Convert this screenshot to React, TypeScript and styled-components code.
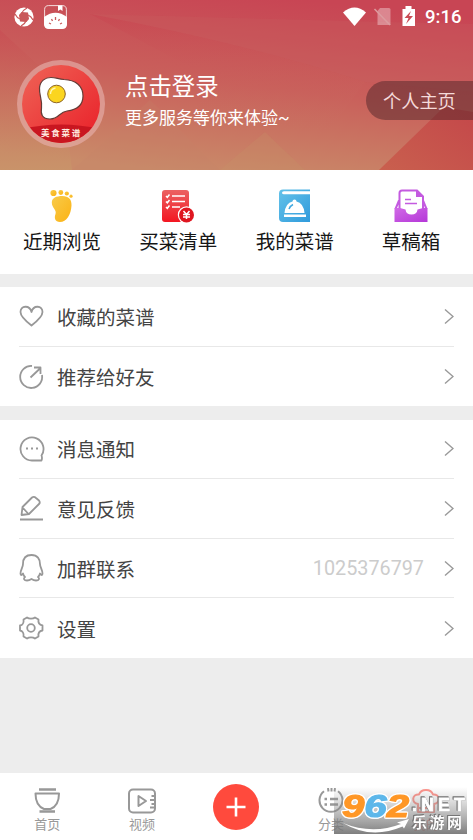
import React from "react";
import styled, { createGlobalStyle } from "styled-components";

const Colors = {
  text: "#161616",
  rowText: "#444",
  icon: "#989898",
  line: "#e8e8e8",
  gap: "#ededed",
  accent: "#ff4a3d",
};

const App = () => {
  return (
    <Screen>
      <GlobalStyle />
      <Header>
        <HeaderBackdrop />
        <StatusBar>
          <StatusGroup>
            <SwirlIcon />
            <NotebookIcon />
          </StatusGroup>
          <StatusIcons />
          <Clock>9:16</Clock>
        </StatusBar>
        <Profile>
          <Avatar>
            <EggLogo />
          </Avatar>
          <ProfileText>
            <LoginTitle>点击登录</LoginTitle>
            <LoginHint>更多服务等你来体验~</LoginHint>
          </ProfileText>
          <HomePill>个人主页</HomePill>
        </Profile>
      </Header>
      <QuickBar>
        {quickItems.map((item) => (
          <QuickItem key={item.label}>
            {item.icon}
            <span>{item.label}</span>
          </QuickItem>
        ))}
      </QuickBar>
      {groups.map((rows, idx) => (
        <Group key={idx}>
          {rows.map((row) => (
            <Row key={row.label}>
              <RowIcon viewBox="0 0 26 28">{row.icon}</RowIcon>
              <RowLabel>{row.label}</RowLabel>
              {row.value && <RowValue>{row.value}</RowValue>}
              <Chevron viewBox="0 0 10 17">
                <path d="M1 1.500 9 8.500 1 15.500" />
              </Chevron>
            </Row>
          ))}
        </Group>
      ))}
      <TabBar>
        <Tab>
          <TabIcon viewBox="0 0 30 26">
            <path d="M7 1.500h17M7.500 23.500h15.500" strokeWidth="2.600" />
            <path d="M3.500 5.500h23.500c0 8-3.500 13.500-8.500 15.500h-6.500C7 19 3.500 13.500 3.500 5.500z" />
          </TabIcon>
          首页
        </Tab>
        <Tab>
          <TabIcon viewBox="0 0 30 26">
            <rect x="2" y="1.500" width="26" height="23" rx="4" />
            <path d="M11.500 8v10l7.500-5zM24.500 8H28M23 12h5M24.500 16H28M23 19.500h5" />
          </TabIcon>
          视频
        </Tab>
        <Tab>
          <AddButton>
            <svg width="20" height="20" viewBox="0 0 20 20">
              <path d="M10 .5v19M.5 10h19" stroke="#fff" strokeWidth="2.600" />
            </svg>
          </AddButton>
        </Tab>
        <Tab>
          <TabIcon viewBox="0 0 30 26">
            <path d="M8 3.200a11.500 11.500 0 1 0 14 0M12 0l.5 3.500M15.500 0v3.500M19 0l-.5 3.500" />
            <path d="M8.500 11h2.500M14 11h8M8.500 16.500h2.500M14 16.500h8" strokeWidth="2.400" />
          </TabIcon>
          分类
        </Tab>
        <Tab $active>
          <TabIcon viewBox="0 0 30 26">
            <path d="M7 16c-7-1-6-10 1-9.500C10 .5 20 .5 22 6.500c7-.5 8 8.500 1 9.500v8H7zM7 20h16" />
          </TabIcon>
          我的
        </Tab>
      </TabBar>
      <SiteMark viewBox="0 0 134 48">
        <defs>
          <linearGradient id="markShade" x1="0" y1="0" x2="0" y2="1">
            <stop offset="0" stopColor="#999" stopOpacity="0" />
            <stop offset=".45" stopColor="#8a8a8a" stopOpacity=".45" />
            <stop offset="1" stopColor="#737373" stopOpacity=".92" />
          </linearGradient>
        </defs>
        <rect width="133" height="47" fill="url(#markShade)" />
        <path d="M9 36Q38 48 67 37l-4-1.500 12-3.500-5 9.500-1.500-2Q37 53 9 36z" fill="#fff" />
        <MarkDigits x="8" y="30" textLength="67" lengthAdjust="spacingAndGlyphs">
          <Digit $color="#ff9726">9</Digit>
          <Digit $color="#5db7ea">6</Digit>
          <Digit $color="#ff9726">2</Digit>
        </MarkDigits>
        <MarkDomain x="78" y="23.500" textLength="53" lengthAdjust="spacing">.NET</MarkDomain>
        <MarkName x="78" y="40.500" textLength="50">乐游网</MarkName>
      </SiteMark>
    </Screen>
  );
};

const HeaderBackdrop = () => (
  <Backdrop viewBox="0 0 473 170" preserveAspectRatio="none">
    <defs>
      <linearGradient id="base" x1=".65" y1="0" x2=".35" y2="1">
        <stop offset="0" stopColor="#c84554" />
        <stop offset=".5" stopColor="#c9605b" />
        <stop offset="1" stopColor="#c98b69" />
      </linearGradient>
      <linearGradient id="rightFold" x1="0" y1="1" x2="1" y2="0">
        <stop offset="0" stopColor="#c9604e" />
        <stop offset="1" stopColor="#c4474a" />
      </linearGradient>
      <linearGradient id="midFold" x1="0" y1="0" x2="0" y2="1">
        <stop offset="0" stopColor="#c94450" stopOpacity=".7" />
        <stop offset=".75" stopColor="#c97866" stopOpacity="0" />
      </linearGradient>
      <linearGradient id="leftFold" x1="0" y1="0" x2="0" y2="1">
        <stop offset="0" stopColor="#c84c53" />
        <stop offset="1" stopColor="#c9986a" />
      </linearGradient>
    </defs>
    <rect width="473" height="170" fill="url(#base)" />
    <path d="M0 30 62 87 72 170H0z" fill="url(#leftFold)" opacity=".6" />
    <path d="M90 14Q240 42 365 82L473 92V24Q300 20 90 14z" fill="#c96462" opacity=".2" />
    <path d="M90 14Q240 42 365 82L300 170H150L215 80z" fill="url(#midFold)" opacity=".7" />
    <path d="M72 170 150 100 220 170z" fill="#c98468" opacity=".2" />
    <path d="M220 170 265 132 305 170z" fill="#c99569" opacity=".25" />
    <path d="M379 170 444 107 473 112V170z" fill="url(#rightFold)" />
  </Backdrop>
);

const SwirlIcon = () => (
  <svg width="20" height="20" viewBox="0 0 20 20">
    <circle cx="10" cy="10" r="9.600" fill="#fff" />
    <path d="M7.500 5 14 5.500 15 12 12.500 15 6 14.500 5 8z" fill="#c95859" />
    <g fill="none" stroke="#c95859" strokeWidth="1.200">
      <path d="M8 6Q9 3 13 1M14 8Q17 9 19 13M12 14Q11 17 7 19M6 12Q3 11 1 7" />
    </g>
  </svg>
);

const NotebookIcon = () => (
  <svg width="23" height="24" viewBox="0 0 23 24">
    <rect x=".6" y=".6" width="21.800" height="22.500" rx="4" fill="none" stroke="#fff" strokeWidth=".8" />
    <path d="M0 12Q11.500 3.500 23 12v7q0 5-5 5H5q-5 0-5-5z" fill="#fff" />
    <path d="M14 .5h4.500V6l-2.200-1.500L14 6z" fill="#fff" />
    <path d="M11.500 12v3M7.500 14l1 2M15.500 14l-1 2M5 18l2 1M18 18l-2 1" stroke="#c95b5b" strokeWidth="1.300" />
  </svg>
);

const StatusIcons = () => (
  <svg width="74" height="22" viewBox="0 0 74 22">
    <path d="M0 6.500Q11.500-3.500 23 6.500L11.500 20z" fill="#fff" />
    <path d="M37 2h9q1.500 0 1.500 1.500V19h-13V5z" fill="#fff" opacity=".35" />
    <path d="m31.500 3 15.500 16" stroke="#dc9c9f" strokeWidth="1.500" />
    <path d="M59.500 3h3V0h6v3h3.500v17H59.500z" fill="#fff" />
    <path d="M68 5 61.500 12h4l-2.500 6 7-8h-4z" fill="#c94c56" />
  </svg>
);

const EggLogo = () => (
  <svg width="78" height="78" viewBox="0 0 78 78">
    <defs>
      <clipPath id="disc"><circle cx="39" cy="39" r="39" /></clipPath>
      <linearGradient id="discFill" x1="0" y1="0" x2="1" y2="1">
        <stop offset="0" stopColor="#ef6457" />
        <stop offset="1" stopColor="#e91f28" />
      </linearGradient>
    </defs>
    <g clipPath="url(#disc)">
      <rect width="78" height="78" fill="url(#discFill)" />
      <path d="M0 64Q39 55 78 64v14H0z" fill="#c91620" />
    </g>
    <path
      d="M17.500 23C18 16 23 12.500 29 12.500C34 12.500 36 14 42 14.500C54 15 61 21 61 31C61 41 53 45 45 46C37 47 37 54 28 54C20 54 18.500 49 19.500 43C20.500 35 17 30 17.500 23z"
      fill="#fff" stroke="#633c36" strokeWidth="1.200"
    />
    <circle cx="34.500" cy="29" r="8.800" fill="#fbd51f" stroke="#8c6428" strokeWidth="1" />
    <path d="M28.500 29q0-5 5-6" fill="none" stroke="#fff6b0" strokeWidth="1.300" />
    <LogoName x="39.500" y="70.500" textAnchor="middle">美食菜谱</LogoName>
  </svg>
);

const quickItems = [
  {
    label: "近期浏览",
    icon: (
      <svg width="34" height="34" viewBox="0 0 34 34">
        <defs>
          <linearGradient id="footGold" x1="0" y1="0" x2="1" y2="1">
            <stop offset="0" stopColor="#f8cb4a" /><stop offset="1" stopColor="#fbb214" />
          </linearGradient>
        </defs>
        <g fill="url(#footGold)">
          <circle cx="8.500" cy="4" r="3.100" />
          <circle cx="15.800" cy="3.500" r="2.400" />
          <circle cx="21.800" cy="4.500" r="2.100" />
          <circle cx="26" cy="7.200" r="1.600" />
          <path d="M6.800 13.500c0-4.500 4.500-6.500 10.500-6.500 6.500 0 9.500 3.500 9.200 9.500-.5 9-5 16.500-11.500 16.500-5 0-6-4-4.500-8 1.500-4-3.700-6-3.700-11.500z" />
        </g>
      </svg>
    ),
  },
  {
    label: "买菜清单",
    icon: (
      <svg width="34" height="34" viewBox="0 0 34 34">
        <defs>
          <linearGradient id="listRed" x1="0" y1="0" x2="0" y2="1">
            <stop offset="0" stopColor="#eb6262" /><stop offset="1" stopColor="#f31621" />
          </linearGradient>
        </defs>
        <rect x="1" y="1" width="27" height="32" rx="3" fill="url(#listRed)" />
        <path d="M11 7h13M11 12.500h13M11 18h8M5 7l1.300 1.300L8.500 5.500M5 12.500l1.300 1.300L8.500 11M5 18l1.300 1.300 2.200-2.800" fill="none" stroke="#fff" strokeWidth="1.500" />
        <circle cx="25.500" cy="26" r="8.700" fill="#fff" />
        <circle cx="25.500" cy="26" r="7.500" fill="#df1620" />
        <path d="m22.500 22 3 3.500 3-3.500M22 25.500h7M22 28h7M25.500 25v5" fill="none" stroke="#fff" strokeWidth="1.500" />
      </svg>
    ),
  },
  {
    label: "我的菜谱",
    icon: (
      <svg width="34" height="34" viewBox="0 0 34 34">
        <defs>
          <linearGradient id="bookBlue" x1="0" y1="0" x2="1" y2="1">
            <stop offset="0" stopColor="#64c2e9" /><stop offset="1" stopColor="#309bdc" />
          </linearGradient>
        </defs>
        <path d="M5 .5h27v1.800H6q-2 0-2 1.500t2 1.500h26V33H5q-4 0-4-4V4.500q0-4 4-4z" fill="url(#bookBlue)" />
        <path d="M6.500 24q1-10 8-11.500a2 2 0 0 1 4 0q7 1.500 8 11.500zM6 25.500h22V28H6z" fill="#fff" />
        <path d="M11 20q1-3 4-4.500" fill="none" stroke="#41a9e0" strokeWidth="1.500" />
      </svg>
    ),
  },
  {
    label: "草稿箱",
    icon: (
      <svg width="34" height="34" viewBox="0 0 34 34">
        <defs>
          <linearGradient id="boxPurple" x1="0" y1="0" x2="1" y2="1">
            <stop offset="0" stopColor="#d06ae6" /><stop offset="1" stopColor="#b537d8" />
          </linearGradient>
        </defs>
        <path d="M5.500 20V4q0-2.500 2.500-2.500H23l6 6V20M5 11.500 1.500 20M29 11.500l3.500 8.500" fill="none" stroke="#c45ae0" strokeWidth="2" />
        <path d="M22 1v7h7z" fill="#c45ae0" />
        <path d="M11 10.500h6M11 14.500h12" stroke="#c45ae0" strokeWidth="1.700" />
        <path d="M.5 19H6l5.500 1.500q.5 5 6 5t6-5L29 19h4.500v14H.5z" fill="url(#boxPurple)" />
      </svg>
    ),
  },
];

const groups: { label: string; icon: React.ReactNode; value?: string }[][] = [
  [
    {
      label: "收藏的菜谱",
      icon: <path d="M12.500 23.500C6 18.500 1.500 14.500 1.500 10c0-6.500 9-7.500 11 0 2-7.500 11-6.500 11 0 0 4.500-4.500 8.500-11 13.500z" />,
    },
    {
      label: "推荐给好友",
      icon: <path d="M13 3A11 11 0 1 0 23 12M11.500 14.500 21 5.500M15 4.500h6.500V11" />,
    },
  ],
  [
    {
      label: "消息通知",
      icon: (
        <>
          <path d="M22.500 20.500A11.500 11.500 0 1 0 13 25.500h9.500q1-2.500 0-5z" />
          <path d="M7 13.500h2M12 13.500h2M17 13.500h2" strokeWidth="2" />
        </>
      ),
    },
    {
      label: "意见反馈",
      icon: <path d="M1 25.500h23M2.500 21l1-8L13 3.500q2-1.500 4 .5l3 2.500q1.500 2 0 3.500L10 20zM3.500 13.500 9.500 20M2.500 21l7.500-1" />,
    },
    {
      label: "加群联系",
      value: "1025376797",
      icon: <path d="M12.500 1c-6 0-8.500 4-8.500 9 0 3-2.500 6-2.500 9.500 0 2 1 2 2.500 0q.5 2 2 3.500c-2 1.500-1 3.500 2 3.500 2 0 3-.5 4.500-1.500 1.500 1 2.500 1.500 4.500 1.500 3 0 4-2 2-3.500q1.500-1.500 2-3.500c1.500 2 2.500 2 2.500 0 0-3.500-2.500-6.500-2.500-9.500 0-5-2.500-9-8.500-9z" />,
    },
    {
      label: "设置",
      icon: (
        <>
          <path d="M8 3.500c2 1.500 6 1.500 8 0l3.500 2c-.5 3 1 5.500 4 6v5c-3 .5-4.500 3-4 6l-3.500 2c-2-1.500-6-1.500-8 0l-3.500-2c.5-3-1-5.500-3.500-6v-5c2.500-.5 4-3 3.500-6z" />
          <circle cx="12" cy="14" r="3.800" />
        </>
      ),
    },
  ],
];

const GlobalStyle = createGlobalStyle`
  body {
    margin: 0;
    font-family: Roboto, "Noto Sans CJK SC", sans-serif;
  }
`;

const Screen = styled.div`
  position: relative;
  display: flex;
  flex-direction: column;
  width: 473px;
  height: 840px;
  overflow: hidden;
  background: ${Colors.gap};
`;

const Header = styled.header`
  position: relative;
  height: 170px;
  flex-shrink: 0;
  color: #fff;
`;

const Backdrop = styled.svg`
  position: absolute;
  inset: 0;
  width: 100%;
  height: 100%;
`;

const StatusBar = styled.div`
  position: relative;
  display: flex;
  align-items: center;
  height: 34px;
  padding: 0 11px 0 14px;
`;

const StatusGroup = styled.div`
  display: flex;
  align-items: center;
  gap: 10px;
  margin-right: auto;
`;

const Clock = styled.span`
  width: 37px;
  margin-left: 8px;
  font-size: 18.5px;
  font-weight: 500;
  white-space: nowrap;
`;

const Profile = styled.div`
  position: relative;
  display: flex;
  align-items: flex-start;
  padding: 26px 0 0 17px;
`;

const Avatar = styled.div`
  display: flex;
  padding: 5px;
  border-radius: 50%;
  background: rgba(230, 175, 170, 0.65);
`;

const ProfileText = styled.div`
  margin: 9px 0 0 20px;
`;

const LoginTitle = styled.div`
  font-size: 23.4px;
  line-height: 36px;
`;

const LoginHint = styled.div`
  font-size: 17px;
  line-height: 27px;
`;

const HomePill = styled.div`
  box-sizing: border-box;
  width: 107px;
  height: 39px;
  margin: 21px 0 0 auto;
  padding-left: 17px;
  border-radius: 20px 0 0 20px;
  background: rgba(75, 35, 40, 0.48);
  color: #f5dada;
  font-size: 18.2px;
  line-height: 41px;
`;

const LogoName = styled.text`
  fill: #ffe9df;
  font-size: 8.5px;
  font-weight: 700;
  letter-spacing: 1.8px;
`;

const QuickBar = styled.nav`
  display: grid;
  grid-template-columns: repeat(4, 116.4px);
  justify-content: center;
  box-sizing: border-box;
  height: 104px;
  flex-shrink: 0;
  padding-top: 19px;
  background: #fff;
`;

const QuickItem = styled.div`
  display: flex;
  flex-direction: column;
  align-items: center;
  gap: 5px;
  color: ${Colors.text};
  font-size: 19.5px;
  line-height: 30px;
`;

const Row = styled.div`
  display: flex;
  align-items: center;
  height: 59.6px;
  box-sizing: border-box;
  border-bottom: 1px solid ${Colors.line};

  &:last-child {
    border-bottom: 0;
  }
`;

const Group = styled.section`
  flex-shrink: 0;
  margin-top: 13.2px;
  padding: 0 19px;
  background: #fff;
`;

const RowIcon = styled.svg`
  width: 26px;
  height: 28px;
  fill: none;
  stroke: ${Colors.icon};
  stroke-width: 1.8;
  stroke-linejoin: round;
`;

const RowLabel = styled.span`
  margin-left: 12px;
  color: ${Colors.rowText};
  font-size: 19.5px;
`;

const Chevron = styled.svg`
  width: 10px;
  height: 17px;
  margin-left: auto;
  fill: none;
  stroke: #999;
  stroke-width: 1.4;
`;

const RowValue = styled.span`
  margin: 0 20px 0 auto;
  color: #ccc;
  font-size: 19.8px;

  & + ${Chevron} {
    margin-left: 0;
  }
`;

const TabBar = styled.footer`
  display: grid;
  grid-template-columns: repeat(5, 1fr);
  height: 67px;
  margin-top: auto;
  background: #fff;
`;

const Tab = styled.div<{ $active?: boolean }>`
  display: flex;
  flex-direction: column;
  align-items: center;
  padding-top: 15px;
  color: ${({ $active }) => ($active ? Colors.accent : Colors.icon)};
  opacity: ${({ $active }) => ($active ? 0.6 : 1)};
  font-size: 13px;
  line-height: 22px;
`;

const TabIcon = styled.svg`
  width: 30px;
  height: 26px;
  fill: none;
  stroke: currentColor;
  stroke-width: 2;
  stroke-linejoin: round;
`;

const AddButton = styled.div`
  display: flex;
  align-items: center;
  justify-content: center;
  width: 46px;
  height: 46px;
  margin-top: -4px;
  border-radius: 50%;
  background: ${Colors.accent};
`;

const SiteMark = styled.svg`
  position: absolute;
  right: 5px;
  bottom: 5px;
  width: 134px;
  height: 48px;
  overflow: visible;
`;

const MarkDigits = styled.text`
  font: italic 700 32px "Liberation Sans", sans-serif;
  filter: drop-shadow(1px 0 0 #fff) drop-shadow(-1px 0 0 #fff) drop-shadow(0 1px 0 #fff) drop-shadow(0 -1px 0 #fff);
`;

const Digit = styled.tspan<{ $color: string }>`
  fill: ${({ $color }) => $color};
  stroke: ${({ $color }) => $color};
  stroke-width: 1.2px;
`;

const MarkDomain = styled.text`
  font: 700 18px "Liberation Sans", sans-serif;
  fill: #fff;
  stroke: #fff;
  stroke-width: 0.9px;
  filter: drop-shadow(0.7px 0.7px 0 #666) drop-shadow(-0.7px -0.7px 0 #777);
`;

const MarkName = styled.text`
  font: 700 15px "Noto Sans CJK SC", sans-serif;
  fill: #fff;
  filter: drop-shadow(0.7px 0.7px 0 #666) drop-shadow(-0.6px -0.6px 0 #777);
`;

export default App;
